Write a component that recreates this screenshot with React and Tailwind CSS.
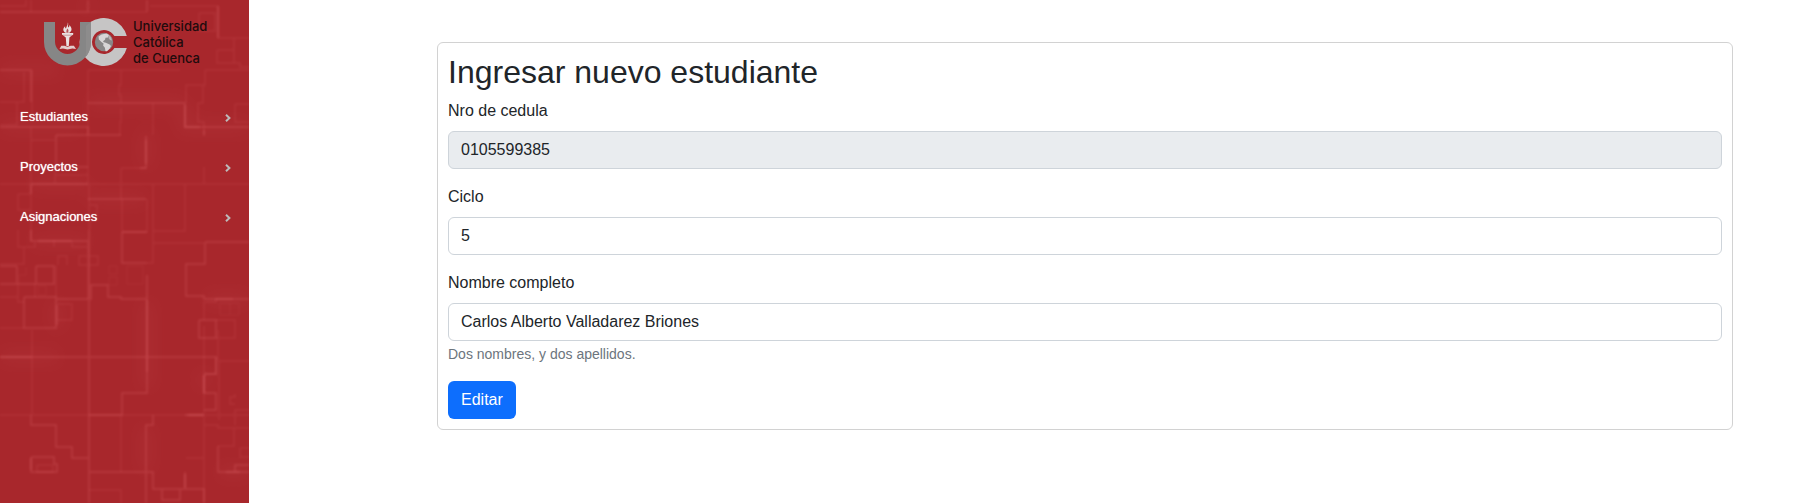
import React from "react";

const MENU = ["Estudiantes", "Proyectos", "Asignaciones"];

function CircuitPattern() {
  return (
    <svg
      aria-hidden="true"
      className="absolute inset-0 h-full w-full"
      viewBox="0 0 249 503"
      preserveAspectRatio="xMinYMin slice"
      fill="none"
    >
      <defs>
        <filter id="soft" x="-50%" y="-50%" width="200%" height="200%">
          <feGaussianBlur stdDeviation="0.8" />
        </filter>
        <filter id="glow" x="-50%" y="-50%" width="200%" height="200%">
          <feGaussianBlur stdDeviation="8" />
        </filter>
      </defs>
      <g stroke="#d8666a" strokeWidth="16" opacity="0.08" filter="url(#glow)">
        <path d="M0 70H60M0 127H80M146 130V168M185 105V127H249M31 184H88M88 199H146M147 300V390M0 357H60M57 300V330M204 370V390M146 425V472M31 241H89M205 299H249M218 472H249M88 0V12M88 103H185" />
      </g>
      <g stroke="#e0686c" strokeWidth="2" opacity="0.12" filter="url(#soft)">
        <path d="M0 6H26V0M31 0V12M88 12H147M150 6H218V38H249M199 13H215V31H199V13M217 50H234V63H217V50M234 38V63H240V67H249M205 70H249M205 70V85H186V103M88 70H180M121 70V85H119V95H121V103M24 72V102H0M32 70V120M17 102V125H0M203 85V103H198V122H204V135M31 127V140H55M31 140V184M88 70V127M88 127V184M121 108V122H120V135M153 103V135M121 168H146M121 168V199M0 184H249M204 167V184M153 184H185V231H153V184M88 205H97V220H90V230M18 194H31M18 194V210H31M235 104H249M235 104V122H249" />
        <path d="M55 168V184M55 175H88M122 199V232H147V199M31 184V241M89 184V230M18 230V247H35V242M72 242V247H88M24 247V264H0M18 284V302H24M35 284V297M0 297H18V284M58 265V256H67V265M79 256H98V265H79V256M153 232V263H147M153 243H204M57 320H72V304H57M32 330V415M0 328H24M0 415H249M54 247V240M204 320V302H216V299M216 338H235V320H216M204 326V503M219 361H249M219 361V420M204 374H216V357M218 330V361M204 425H218V428H234V446H218M235 425V410H249M235 404H230V397H235V394M235 428H249M89 490H121V503M121 415V472M186 458H204M240 448H249M240 448V457H249M37 465H53V472H37V465M56 266V297M88 242V299" />
      </g>
      <g stroke="#e0686c" strokeWidth="1" opacity="0.12" filter="url(#soft)">
        <path d="M109 266H117V274H109V266M109 277H117V285H109V277M127 266H143V284H127V266M19 284V275H26V267M38 286H46V295H38V286M220 303H230V315H220V303M230 303H239V315H230" />
      </g>
      <g stroke="#e0686c" strokeWidth="2" opacity="0.23" filter="url(#soft)">
        <path d="M0 12H88V0M147 0V12M0 70H31V102M218 6V38M88 103H185V127H205M205 127H249M0 127H88V135M56 135H121M56 135V167H88M146 136V168H140M31 194V184H88M88 199H146M31 230V241H89V230M36 266H54V284H36V266M0 284H54M17 266V284M0 266H17M24 297H56V328H24V297M56 299H91V285H108V297H121V299H146M89 242V357M122 232H147M122 232V263H147M147 275V393H122V415H89M0 357H204M31 415V425H56V447H72V458H89M31 457H54V464H57V472H31V457M89 357V503M205 242H249M205 242V264H186V296H204V299H249M199 320H216V338H199V320M204 375V393H216V410H204M204 357H216V374H204M185 415H204M153 415V425H146V503M89 472H153V489H204V503M185 472V489M162 489V500H180V489M218 446V472H249M235 472V465H249" />
      </g>
      <g stroke="#e0686c" strokeWidth="2" opacity="0.2" filter="url(#soft)">
        <path d="M147 300V372M146 140V164M0 357H32M185 105V127H200M38 241H72M215 299H233M57 305V325M188 415H204M185 474V488M204 375V393M31 458V470M226 472H240M204 130V136" />
      </g>
    </svg>
  );
}

function LogoMark() {
  return (
    <svg aria-hidden="true" className="h-12 w-21 shrink-0" viewBox="44 18 84 48">
      <path
        d="M126.8 36A24 24 0 1 0 126.8 48H114.4A12 12 0 1 1 114.4 36Z"
        fill="#c6c5c5"
      />
      <path d="M44 22H55V41.5A12.5 12.5 0 0 0 80 41.5V22H91V42A23.5 23.5 0 0 1 44 42Z" fill="#868686" />
      <path d="M86.5 56A23.500 23.500 0 0 0 91 42V22A24 24 0 0 0 86 26V56Z" fill="#8d8c8c" />
      <circle cx="104" cy="42" r="9.2" fill="#898787" />
      <path
        d="M98.500 36.500l3-2 5-1 2.500 1.500-1 2.500-2.500.3-.5 2-2 1.400.8 1 2 .5 3.800 1.700 1.400 1.600-1.400 2.700-2.700 2.600-1.400 0-.6-3.500-1.800-2.200.5-2-2.200-1.500-2.500-2.600z"
        fill="#d8d6d6"
      />
      <path d="M109 35l2 2.500 1 3-2-.5-1.500-2z" fill="#b9b5b5" />
      <path
        d="M67.700 22.500c1.500 2.200-.8 3.200.8 5 .9-.6.9-1.500.8-2.500 2.600 2.400 3.300 5.400.2 7.800h-4.200c-3-2.400-2.200-4.800-.2-6.600-.1 1.200.2 1.900.9 2.300.3-2.300 2.300-3.400 1.700-6z"
        fill="#e9e1e1"
      />
      <path d="M67.500 28.500c1 1.200 1.300 2.400.5 4h-1.300c-.8-1.500-.1-2.800.8-4z" fill="#b65257" />
      <path d="M62 33h11.200v1.500l-2 1.600-1.800 1.400-.6 8.500h-2.400l-.6-8.500-1.900-1.400-1.900-1.600z" fill="#e9e1e1" />
      <path d="M59.500 49l1.800-3.300h3.200l3 1.100 3.200-1.100h3.200l2.100 3.300-3.600-.4-4.900.8-4.500-.8z" fill="#e2cccc" />
      <path d="M63 35.200h9" stroke="#b9686c" strokeWidth=".6" />
    </svg>
  );
}

function Chevron() {
  return (
    <svg aria-hidden="true" className="mt-0.5 h-2 w-[6px]" viewBox="0 0 6 8" fill="none">
      <path d="M1 .8L4.400 4 1 7.200" stroke="#bdb9b9" strokeWidth="2" />
    </svg>
  );
}

function Sidebar() {
  return (
    <aside className="relative w-[249px] shrink-0 bg-[#a8272c]">
      <CircuitPattern />
      <div className="relative">
        <a href="#inicio" className="flex items-center gap-[5px] pt-[18px] pl-11 text-[#210b0d]">
          <LogoMark />
          <span className="text-[13px] leading-4 font-medium [font-family:Inter,sans-serif]">
            Universidad
            <br />
            Católica
            <br />
            de Cuenca
          </span>
        </a>
        <nav className="mt-[26px]">
          {MENU.map((name) => (
            <a
              key={name}
              href={"#" + name.toLowerCase()}
              className="flex h-[50px] items-center justify-between pr-[18px] pl-5 text-[13px] text-white text-shadow-[0_0_1px_#ffffffd0]"
            >
              {name}
              <Chevron />
            </a>
          ))}
        </nav>
      </div>
    </aside>
  );
}

function Field({ id, label, help, ...input }) {
  return (
    <div className="mb-4">
      <label htmlFor={id} className="mb-2 block w-fit">
        {label}
      </label>
      <input
        id={id}
        type="text"
        aria-describedby={help ? id + "-help" : undefined}
        className="block h-[38px] w-full rounded-md border border-[#ced4da] bg-white px-3 text-[#212529] read-only:bg-[#e9ecef]"
        {...input}
      />
      {help && (
        <p id={id + "-help"} className="mt-0.5 text-sm leading-[22px] text-[#6c757d]">
          {help}
        </p>
      )}
    </div>
  );
}

export default function App() {
  return (
    <div className="flex min-h-screen bg-white text-base text-[#212529] [font-family:'Liberation_Sans',Arial,sans-serif]">
      <Sidebar />
      <main className="min-w-0 flex-1 pt-[42px] pl-[119px]">
        <div className="mx-auto max-w-[1320px] px-3">
          <form
            className="rounded-md border border-[#d2d2d2] p-[10px]"
            onSubmit={(event) => event.preventDefault()}
          >
            <h2 className="mb-2 text-[32px] leading-[38px]">Ingresar nuevo estudiante</h2>
            <Field id="cedula" label="Nro de cedula" defaultValue="0105599385" readOnly />
            <Field id="ciclo" label="Ciclo" defaultValue="5" />
            <Field
              id="nombre"
              label="Nombre completo"
              defaultValue="Carlos Alberto Valladarez Briones"
              help="Dos nombres, y dos apellidos."
            />
            <button type="submit" className="block h-[38px] rounded-md bg-[#0d6efd] px-[13px] text-white">
              Editar
            </button>
          </form>
        </div>
      </main>
    </div>
  );
}
